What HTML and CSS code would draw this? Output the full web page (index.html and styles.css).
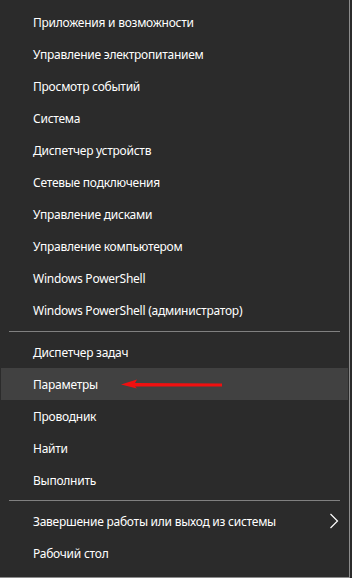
FILE: index.html
```html
<!DOCTYPE html>
<html lang="ru">
<head>
    <meta charset="UTF-8">
    <title>Меню Win+X</title>
    <link rel="stylesheet" href="styles.css">
</head>
<body>

<!-- Context menu of the Start button -->
<div class="menu">
    <div class="item">Приложения и возможности</div>
    <div class="item">Управление электропитанием</div>
    <div class="item">Просмотр событий</div>
    <div class="item">Система</div>
    <div class="item">Диспетчер устройств</div>
    <div class="item">Сетевые подключения</div>
    <div class="item">Управление дисками</div>
    <div class="item">Управление компьютером</div>
    <div class="item">Windows PowerShell</div>
    <div class="item">Windows PowerShell (администратор)</div>

    <div class="separator first"></div>

    <div class="item">Диспетчер задач</div>
    <div class="item active">
        Параметры
        <svg class="arrow" width="110" height="14" viewBox="0 0 110 14">
            <polygon points="0,6.5 16,1.5 14,5 101,5.5 101,8.5 14,8.5 16,10.5" fill="#f01010"/>
        </svg>
    </div>
    <div class="item">Проводник</div>
    <div class="item">Найти</div>
    <div class="item">Выполнить</div>

    <div class="separator"></div>

    <div class="item has-sub">
        Завершение работы или выход из системы
        <svg class="chevron" width="10" height="16" viewBox="0 0 10 16">
            <polyline points="1.5,1 8.5,8 1.5,15" fill="none" stroke="#ffffff" stroke-width="1.2"/>
        </svg>
    </div>
    <div class="item">Рабочий стол</div>
</div>

</body>
</html>
```

FILE: styles.css
```css
* {
    margin: 0;
    padding: 0;
    box-sizing: border-box;
}

body {
    background: #2b2b2b;
    font-family: 'Noto Sans', 'Open Sans', sans-serif;
    width: 352px;
    height: 578px;
    overflow: hidden;
}

.menu {
    width: 350px;
    height: 578px;
    padding: 6px 1px 0 1px;
    border-right: 1px solid #8c8c8c;
    border-bottom: 1px solid #8c8c8c;
}

.item {
    position: relative;
    display: flex;
    align-items: center;
    height: 32px;
    padding-left: 32px;
    color: #ffffff;
    font-size: 12px;
    letter-spacing: -0.25px;
}

.item.active {
    background: #414141;
}

.separator {
    height: 1px;
    margin: 4px 8px 4px 8px;
    background: #808080;
}

.separator.first {
    margin-top: 5px;
}

.has-sub {
    justify-content: space-between;
    padding-right: 9px;
}

.arrow {
    position: absolute;
    left: 120px;
    top: 10px;
}
```
